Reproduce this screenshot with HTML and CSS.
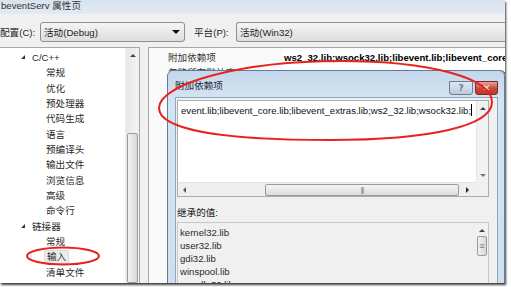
FILE: index.html
```html
<!DOCTYPE html>
<html lang="zh-CN">
<head>
    <meta charset="UTF-8">
    <meta name="viewport" content="width=device-width, initial-scale=1.0">
    <title>libeventServ 属性页</title>
    <link rel="stylesheet" href="styles.css">
</head>
<body>

    <div class="window">
        <div class="titlebar">beventServ 属性页</div>

        <div class="config-row">
            <span class="label">配置(C):</span>
            <div class="combo combo-config">
                <span>活动(Debug)</span>
                <span class="drop"></span>
            </div>
            <span class="label label-platform">平台(P):</span>
            <div class="combo combo-platform">
                <span>活动(Win32)</span>
            </div>
        </div>

        <div class="main">
            <div class="tree">
                <ul class="tree-list">
                    <li class="node">C/C++</li>
                    <li>常规</li>
                    <li>优化</li>
                    <li>预处理器</li>
                    <li>代码生成</li>
                    <li>语言</li>
                    <li>预编译头</li>
                    <li>输出文件</li>
                    <li>浏览信息</li>
                    <li>高级</li>
                    <li>命令行</li>
                    <li class="node">链接器</li>
                    <li>常规</li>
                    <li><span class="selected">输入</span></li>
                    <li>清单文件</li>
                    <li>调试</li>
                </ul>
                <div class="tree-scroll">
                    <span class="arrow-up"></span>
                    <div class="thumb thumb-v"></div>
                </div>
            </div>

            <div class="props">
                <div class="prop-row">
                    <span class="prop-name">附加依赖项</span>
                    <span class="prop-value bold">ws2_32.lib;wsock32.lib;libevent.lib;libevent_core.lib;libevent_extras.lib</span>
                </div>
                <div class="prop-row">
                    <span class="prop-name">忽略所有默认库</span>
                    <span class="prop-value"></span>
                </div>
            </div>
        </div>

        <!-- modal editor window on top of the property page -->
        <div class="dialog">
            <div class="dialog-title">
                <span class="dialog-caption">附加依赖项</span>
                <div class="caption-buttons">
                    <span class="btn-help">?</span>
                    <span class="btn-close">✕</span>
                </div>
            </div>
            <div class="dialog-body">
                <div class="editbox">
                    <div class="edit-text">event.lib;libevent_core.lib;libevent_extras.lib;ws2_32.lib;wsock32.lib;<span class="caret"></span></div>
                    <div class="edit-vscroll">
                        <span class="arrow-up"></span>
                        <span class="arrow-down"></span>
                    </div>
                    <div class="edit-hscroll">
                        <span class="arrow-left"></span>
                        <div class="thumb thumb-h"><span class="grip">|||</span></div>
                        <span class="arrow-right"></span>
                    </div>
                    <div class="edit-corner"></div>
                </div>

                <div class="inherited-label">继承的值:</div>
                <div class="listbox">
                    <ul class="list-items">
                        <li>kernel32.lib</li>
                        <li>user32.lib</li>
                        <li>gdi32.lib</li>
                        <li>winspool.lib</li>
                        <li>comdlg32.lib</li>
                    </ul>
                    <div class="list-scroll">
                        <span class="arrow-up"></span>
                        <div class="thumb thumb-v small"><span class="grip-v">≡</span></div>
                    </div>
                </div>
            </div>
        </div>

        <svg class="marks" width="505" height="283" viewBox="0 0 505 283">
            <path d="M159,108 C159,84 240,61 340,61 C430,61 492,78 492,102 C492,126 430,140 330,140 C230,140 159,131 159,108 Z" />
            <ellipse cx="63" cy="256" rx="36" ry="8.5" />
        </svg>
    </div>

</body>
</html>
```

FILE: styles.css
```css
body {
    margin: 0;
    width: 511px;
    height: 287px;
    overflow: hidden;
    background: #fff;
    font-family: "Liberation Sans", "Noto Sans CJK SC", sans-serif;
    font-size: 9.6px;
    color: #1e1e1e;
}
.window {
    position: relative;
    width: 505px;
    height: 283px;
    overflow: hidden;
    background: #f0f0f0;
    box-shadow: 1px 2px 2px rgba(0, 0, 0, 0.75);
}
.titlebar {
    height: 14px;
    line-height: 12px;
    padding-left: 1px;
    background: linear-gradient(#d9e4ef, #e2eaf3);
    color: #333;
}
.config-row {
    display: flex;
    align-items: center;
    height: 33px;
    padding-top: 2px;
    box-sizing: border-box;
}
.label {
    flex-shrink: 0;
    width: 40px;
    white-space: nowrap;
    overflow: hidden;
}
.label-platform {
    width: 42px;
    margin-left: 9px;
}
.combo {
    display: flex;
    align-items: center;
    justify-content: space-between;
    height: 20px;
    box-sizing: border-box;
    padding: 0 4px 0 3px;
    border: 1px solid #8e8f8f;
    border-radius: 3px;
    background: linear-gradient(#f5f5f5, #e9e9e9 50%, #dedede);
}
.combo-config {
    flex-shrink: 0;
    width: 145px;
}
.combo-platform {
    flex: 1;
    border-right: none;
    border-radius: 3px 0 0 3px;
}
.drop {
    width: 0;
    height: 0;
    border-left: 4px solid transparent;
    border-right: 4px solid transparent;
    border-top: 4px solid #111;
}
.main {
    display: flex;
    gap: 8px;
    height: 236px;
}
.tree {
    display: flex;
    flex-shrink: 0;
    width: 140px;
    box-sizing: border-box;
    border-top: 1px solid #a7a7a7;
    border-right: 1px solid #a7a7a7;
    background: #fff;
}
.tree-list {
    flex: 1;
    margin: 0;
    padding: 2px 0 0 0;
    list-style: none;
    line-height: 15.33px;
    color: #2a2a2a;
}
.tree-list li {
    padding-left: 46px;
    white-space: nowrap;
}
.tree-list li.node {
    position: relative;
    padding-left: 32px;
}
.tree-list li.node::before {
    content: "";
    position: absolute;
    left: 21px;
    top: 5px;
    border-left: 4px solid transparent;
    border-bottom: 4px solid #333;
}
.selected {
    display: inline-block;
    margin-left: -2px;
    padding: 0 2px;
    line-height: 12px;
    background: #ececec;
    border: 1px solid #dadada;
    border-radius: 2px;
}
.tree-scroll {
    display: flex;
    flex-direction: column;
    align-items: center;
    width: 13px;
    background: linear-gradient(90deg, #e8e8e8, #f3f3f3);
    border-left: 1px solid #ececec;
}
.arrow-up {
    width: 0;
    height: 0;
    margin-top: 6px;
    border-left: 3px solid transparent;
    border-right: 3px solid transparent;
    border-bottom: 3px solid #444;
}
.arrow-down {
    width: 0;
    height: 0;
    border-left: 3px solid transparent;
    border-right: 3px solid transparent;
    border-top: 3px solid #777;
}
.arrow-left {
    width: 0;
    height: 0;
    border-top: 3px solid transparent;
    border-bottom: 3px solid transparent;
    border-right: 3px solid #555;
}
.arrow-right {
    width: 0;
    height: 0;
    border-top: 3px solid transparent;
    border-bottom: 3px solid transparent;
    border-left: 3px solid #222;
}
.thumb {
    box-sizing: border-box;
    border: 1px solid #9a9a9a;
    border-radius: 2px;
}
.thumb-v {
    width: 11px;
    margin-top: 76px;
    height: 200px;
    background: linear-gradient(90deg, #f2f2f2, #d8d8d8);
}
.props {
    flex: 1;
    min-width: 0;
    box-sizing: border-box;
    border-top: 1px solid #a7a7a7;
    border-left: 1px solid #a7a7a7;
    padding-top: 2px;
    background: #fafafa;
}
.prop-row {
    display: flex;
    height: 15px;
    line-height: 15px;
    white-space: nowrap;
    overflow: hidden;
}
.prop-name {
    flex-shrink: 0;
    width: 115px;
    padding-left: 19px;
    color: #333;
}
.prop-value {
    flex: 1;
    padding-left: 1px;
    background: #fff;
    overflow: hidden;
    color: #000;
}
.bold {
    font-weight: bold;
}
.dialog {
    position: absolute;
    left: 167px;
    top: 70px;
    width: 338px;
    height: 240px;
    box-sizing: border-box;
    padding: 0 6px 0 7px;
    border: 1px solid #5d7d9e;
    border-radius: 6px 6px 0 0;
    background: linear-gradient(#c4d7eb, #d6e4f2 30px, #cfdeee);
    box-shadow: 1px 0 0 #1b2f44;
}
.dialog-title {
    display: flex;
    justify-content: space-between;
    height: 26px;
}
.dialog-caption {
    padding-top: 7px;
    line-height: 16px;
    color: #1e2b38;
}
.caption-buttons {
    display: flex;
    gap: 2px;
    margin-top: 10px;
    height: 14px;
}
.btn-help,
.btn-close {
    display: flex;
    align-items: center;
    justify-content: center;
    height: 14px;
    box-sizing: border-box;
    border: 1px solid #6a7f95;
    border-radius: 0 0 3px 3px;
    font-family: "DejaVu Sans", sans-serif;
    font-size: 9px;
    font-weight: bold;
}
.btn-help {
    width: 24px;
    background: linear-gradient(#e0e9f2, #b9cbdd);
    color: #6a7c8e;
}
.btn-close {
    width: 23px;
    border-color: #7a2a25;
    background: linear-gradient(#e7a49a, #c9473a 55%, #c0392d);
    color: #fff;
}
.dialog-body {
    height: 220px;
    box-sizing: border-box;
    padding: 2px 8px 0 1px;
    border: 1px solid #8ea8c4;
    background: #f0f0f0;
}
.editbox {
    display: grid;
    grid-template-columns: minmax(0, 1fr) 12px;
    grid-template-rows: 1fr 14px;
    height: 97px;
    box-sizing: border-box;
    border: 1px solid #abadb3;
    background: #fff;
}
.edit-text {
    padding: 2px 0 0 3px;
    line-height: 15px;
    white-space: nowrap;
    overflow: hidden;
    color: #111;
}
.caret {
    display: inline-block;
    width: 1px;
    height: 12px;
    vertical-align: -2px;
    background: #000;
}
.edit-vscroll {
    display: flex;
    flex-direction: column;
    align-items: center;
    justify-content: space-between;
    padding-bottom: 5px;
    background: #f2f2f2;
    border-left: 1px solid #e6e6e6;
}
.edit-hscroll {
    display: flex;
    align-items: center;
    padding: 0 7px 0 5px;
    background: #efefef;
    border-top: 1px solid #e4e4e4;
}
.thumb-h {
    display: flex;
    align-items: center;
    justify-content: center;
    height: 12px;
    margin: 0 7px 0 79px;
    flex: 1;
    background: linear-gradient(#f5f5f5, #dcdcdc);
}
.grip {
    font-size: 7px;
    line-height: 7px;
    color: #777;
    letter-spacing: -1px;
}
.edit-corner {
    background: #f0f0f0;
}
.inherited-label {
    margin-top: 8px;
    line-height: 16px;
    color: #222;
}
.listbox {
    display: flex;
    margin-top: 1px;
    height: 80px;
    border: 1px solid #c8c8c8;
    background: #f0f0f0;
}
.list-items {
    flex: 1;
    margin: 0;
    padding: 3px 0 0 2px;
    list-style: none;
    line-height: 13px;
    color: #2a2a2a;
}
.list-scroll {
    display: flex;
    flex-direction: column;
    align-items: center;
    width: 12px;
}
.thumb-v.small {
    display: flex;
    align-items: center;
    justify-content: center;
    width: 10px;
    height: 20px;
    margin-top: 4px;
}
.grip-v {
    font-size: 9px;
    line-height: 9px;
    color: #777;
}
.marks {
    position: absolute;
    left: 0;
    top: 0;
    fill: none;
    stroke: #e8231e;
    stroke-width: 2;
}
```
